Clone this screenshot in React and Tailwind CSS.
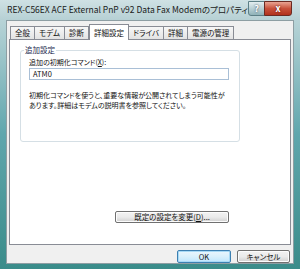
import React from "react";

const jp = { fontFamily: '"Noto Sans CJK JP", "Liberation Sans", sans-serif' };

function Tab({ label, selected }) {
  if (selected) {
    return (
      <div className="relative z-10 -mb-px flex h-[16px] items-center border border-b-0 border-[#898c95] bg-white px-[4px] text-[7.5px] text-[#111]">
        {label}
      </div>
    );
  }
  return (
    <div className="mt-[3px] flex h-[13px] items-center border border-b-0 border-[#898c95] bg-gradient-to-b from-[#f7f7f7] to-[#e3e3e3] px-[4px] text-[7.5px] text-[#111] -ml-px first:ml-0">
      {label}
    </div>
  );
}

function VistaButton({ children, className = "", isDefault }) {
  return (
    <div
      className={
        "flex items-center justify-center rounded-[2px] border text-[7.5px] text-[#111] " +
        (isDefault
          ? "border-[#3c7fb1] bg-gradient-to-b from-[#eaf6fd] via-[#d9f0fc] to-[#bee6fd] shadow-[inset_0_0_0_1px_#a7d9f5] "
          : "border-[#707070] bg-gradient-to-b from-[#f2f2f2] via-[#ebebeb] to-[#cfcfcf] shadow-[inset_0_0_0_1px_#fcfcfc] ") +
        className
      }
    >
      {children}
    </div>
  );
}

export default function App() {
  return (
    <div
      className="flex h-[269px] w-[300px] flex-col overflow-hidden bg-gradient-to-b from-[#c6dbde] via-[#5fa6ad] to-[#3a8c8a] [font-feature-settings:'palt']"
      style={jp}
    >
      {/* title bar */}
      <div className="flex h-[20px] shrink-0 items-start justify-between bg-gradient-to-b from-[#cfe1e4] to-[#b6d0d4] pl-[7px] pr-[8px]">
        <div className="pt-[4px] text-[8.5px] leading-[11px] text-[#1a1a1a]">
          REX-C56EX ACF External PnP v92 Data Fax Modemのプロパティ
        </div>
        <div className="flex pt-[1px]">
          <div className="flex h-[15px] w-[17px] items-center justify-center rounded-bl-[3px] border border-[#5c7f86] bg-gradient-to-b from-[#e4eef0] via-[#b9d0d5] to-[#8fb2b8] text-[9px] font-bold text-white [text-shadow:0_0_2px_#234]">
            ?
          </div>
          <div className="-ml-px flex h-[15px] w-[28px] items-center justify-center rounded-br-[3px] border border-[#6b2a22] bg-gradient-to-b from-[#e8a493] via-[#c8513b] to-[#b0311c] text-[9px] font-bold text-white [text-shadow:0_0_2px_#400]">
            x
          </div>
        </div>
      </div>

      {/* client area */}
      <div className="mx-[6px] mb-[6px] flex flex-1 flex-col border border-[#8d9ea3] bg-[#f0f0f0] px-[2px] pt-[2px]">
        {/* tabs */}
        <div className="flex items-end pl-[1px]">
          <Tab label="全般" />
          <Tab label="モデム" />
          <Tab label="診断" />
          <Tab label="詳細設定" selected />
          <Tab label="ドライバ" />
          <Tab label="詳細" />
          <Tab label="電源の管理" />
        </div>
        {/* panel */}
        <div className="flex h-[206px] flex-col border border-[#898c95] bg-white px-[10px] pt-[5px]">
          <fieldset className="mr-[40px] h-[97px] rounded-[3px] border border-[#d5dfe5] px-[8px] pb-0 pt-0">
            <legend className="-ml-[5px] px-[1px] text-[7.5px] leading-[10px] text-[#1e2a50]">追加設定</legend>
            <div className="mt-[3px] text-[7px] leading-[9px] text-[#111]">追加の初期化コマンド(<span className="underline">X</span>):</div>
            <div className="mr-[2px] mt-[1px] flex h-[12px] items-center border border-[#a9bfd6] px-[3px] text-[7.5px] text-[#111]">
              ATM0
            </div>
            <div className="mt-[10px] text-[7px] leading-[10px] text-[#111]">
              初期化コマンドを使うと、重要な情報が公開されてしまう可能性が
              <br />
              あります。詳細はモデムの説明書を参照してください。
            </div>
          </fieldset>
          <div className="mt-[69px] flex justify-end pr-[51px]">
            <VistaButton className="h-[12px] w-[114px]">
              既定の設定を変更(<span className="underline">D</span>)...
            </VistaButton>
          </div>
        </div>
        {/* bottom buttons */}
        <div className="mt-[5px] flex justify-end gap-[6px] pr-[1px]">
          <VistaButton isDefault className="h-[13px] w-[54px]">OK</VistaButton>
          <VistaButton className="h-[13px] w-[53px]">キャンセル</VistaButton>
        </div>
      </div>
    </div>
  );
}
